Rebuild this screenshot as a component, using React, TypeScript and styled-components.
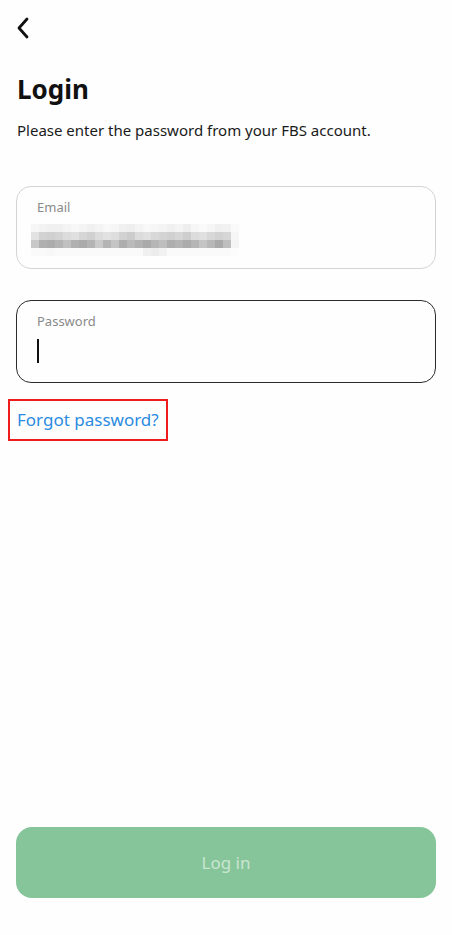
import styled, { createGlobalStyle } from 'styled-components'

const GlobalStyle = createGlobalStyle`
  html, body {
    margin: 0;
    padding: 0;
    background: #fefefe;
  }
  body {
    font-family: "Noto Sans", "Open Sans", sans-serif;
    color: #111;
  }
`

const Page = styled.div`
  display: flex;
  flex-direction: column;
  min-height: 935px;
  box-sizing: border-box;
  padding: 0 16px 37px;
`

const TopBar = styled.div`
  height: 56px;
  display: flex;
  align-items: center;
`

const BackButton = styled.button`
  border: none;
  background: none;
  padding: 0;
  width: 16px;
  height: 24px;
  display: flex;
  align-items: center;
  justify-content: flex-start;
  margin-top: -1px;
`

const Title = styled.h1`
  margin: 16px 0 0 1px;
  font-size: 26px;
  line-height: 34px;
  font-weight: 700;
  color: #111;
`

const Subtitle = styled.p`
  margin: 14px 0 0 1px;
  font-size: 15px;
  line-height: 20px;
  color: #1a1a1a;
`

const Field = styled.div<{ $active?: boolean; $gap: number }>`
  margin-top: ${p => p.$gap}px;
  height: 83px;
  box-sizing: border-box;
  border: ${p => (p.$active ? '1.5px solid #2b2b2b' : '1.5px solid #d4d4d4')};
  border-radius: 15px;
  padding: 11px 20px 0 20px;
  display: flex;
  flex-direction: column;
`

const Label = styled.div`
  font-size: 13px;
  line-height: 18px;
  color: #8a8a8a;
`

const Mosaic = styled.div`
  display: grid;
  grid-template-columns: repeat(26, 8px);
  grid-auto-rows: 8px;
  margin: 8px 0 0 -6px;
`

const Cell = styled.div<{ $shade: number }>`
  background: ${p => `rgb(${p.$shade}, ${p.$shade}, ${p.$shade})`};
`

const Caret = styled.div`
  width: 2px;
  height: 24px;
  background: #111;
  margin-top: 9px;
`

const ForgotLink = styled.a`
  align-self: flex-start;
  margin: 16px 0 0 -8px;
  padding: 7px 7px 8px 7px;
  border: 2.5px solid #ee1c1c;
  font-size: 17px;
  line-height: 23px;
  color: #2a8be0;
  text-decoration: none;
`

const Spacer = styled.div`
  flex: 1;
`

const LoginButton = styled.button`
  height: 71px;
  border: none;
  border-radius: 16px;
  background: #86c59a;
  color: #c9e5d0;
  font-family: "Noto Sans", "Open Sans", sans-serif;
  font-size: 17px;
`

const rows = [
  [246, 242, 240, 240, 244, 248, 244, 240, 244, 248, 246, 240, 238, 244, 248, 246, 244, 240, 244, 238, 246, 250, 246, 240, 242, 250],
  [226, 210, 208, 212, 220, 224, 214, 208, 220, 226, 222, 210, 204, 220, 224, 216, 212, 208, 214, 206, 220, 224, 216, 210, 214, 246],
  [200, 176, 172, 180, 192, 176, 170, 180, 202, 180, 196, 174, 186, 178, 170, 182, 190, 174, 180, 172, 182, 196, 184, 170, 190, 244],
  [250, 250, 248, 250, 250, 250, 250, 250, 250, 250, 250, 250, 250, 250, 240, 236, 242, 250, 250, 250, 250, 250, 250, 250, 250, 252],
]

function Chevron() {
  return (
    <svg width="14" height="22" viewBox="0 0 14 22" fill="none">
      <path d="M11 2 L3 11 L11 20" stroke="#111" strokeWidth="2.8" strokeLinecap="round" strokeLinejoin="round" />
    </svg>
  )
}

export default function App() {
  return (
    <>
      <GlobalStyle />
      <Page>
        <TopBar>
          <BackButton aria-label="Back">
            <Chevron />
          </BackButton>
        </TopBar>
        <Title>Login</Title>
        <Subtitle>Please enter the password from your FBS account.</Subtitle>
        <Field $gap={46}>
          <Label>Email</Label>
          <Mosaic>
            {rows.flatMap((r, ri) => r.map((s, ci) => <Cell key={ri + '-' + ci} $shade={s} />))}
          </Mosaic>
        </Field>
        <Field $gap={31} $active>
          <Label>Password</Label>
          <Caret />
        </Field>
        <ForgotLink href="#">Forgot password?</ForgotLink>
        <Spacer />
        <LoginButton disabled>Log in</LoginButton>
      </Page>
    </>
  )
}
